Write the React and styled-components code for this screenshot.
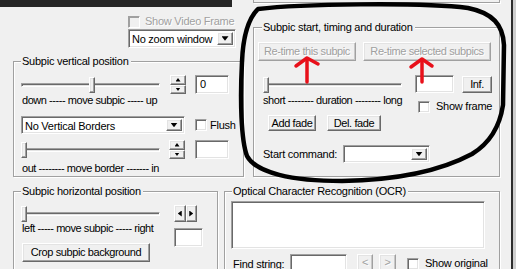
import React from 'react';
import styled, { createGlobalStyle, css } from 'styled-components';

const GlobalStyle = createGlobalStyle`
  html, body {
    margin: 0;
    padding: 0;
    background: #f0f0f0;
  }
  body {
    font-family: 'Liberation Sans', Arial, sans-serif;
  }
`;

const raised = css`
  box-sizing: border-box;
  background: #f0f0f0;
  border: 1px solid;
  border-color: #fff #696969 #696969 #fff;
  box-shadow: inset -1px -1px 0 #a0a0a0, inset 1px 1px 0 #e3e3e3;
`;

const sunken = css`
  box-sizing: border-box;
  background: #fff;
  border: 1px solid;
  border-color: #a0a0a0 #fff #fff #a0a0a0;
  box-shadow: inset 1px 1px 0 #696969, inset -1px -1px 0 #e3e3e3;
`;

const disabledText = css`
  color: #a0a0a0;
  text-shadow: 1px 1px 0 #fff;
`;

const Page = styled.div`
  position: relative;
  width: 516px;
  height: 269px;
  overflow: hidden;
  display: flex;
  background: #f0f0f0;
  font: 11px/13px 'Liberation Sans', Arial, sans-serif;
  letter-spacing: -0.25px;
  color: #000;
`;

const Main = styled.div`
  width: 503px;
  display: flex;
  flex-direction: column;
  flex: none;
`;

const EdgeStrip = styled.div`
  flex: none;
  width: 13px;
  display: flex;
  box-sizing: border-box;
  padding-left: 8px;
  &::before {
    content: '';
    width: 2px;
    background: #2e2e2e;
  }
  &::after {
    content: '';
    width: 3px;
    background: #cfcfcf;
  }
`;

const TopSection = styled.div`
  display: flex;
  height: 177px;
  flex: none;
`;

const BottomSection = styled.div`
  display: flex;
  align-items: flex-start;
`;

const LeftTop = styled.div`
  width: 253px;
  flex: none;
  display: flex;
  flex-direction: column;
`;

const TimingColumn = styled.div`
  width: 247px;
  flex: none;
  display: flex;
  flex-direction: column;
`;

const DarkBar = styled.div`
  width: 232px;
  height: 7px;
  background: #262626;
`;

const PanelStub = styled.div`
  box-sizing: border-box;
  height: 3px;
  border: 1px solid #a0a0a0;
  border-top: none;
  box-shadow: 1px 1px 0 #fff;
`;

const Group = styled.fieldset`
  box-sizing: border-box;
  flex: none;
  min-width: 0;
  margin: ${(p) => p.$margin || '0'};
  width: ${(p) => p.$w}px;
  height: ${(p) => p.$h}px;
  padding: ${(p) => p.$pad};
  border: 1px solid #a0a0a0;
  box-shadow: inset 1px 1px 0 #fff, 1px 1px 0 #fff;
`;

const Legend = styled.legend`
  height: 13px;
  line-height: 13px;
  padding: 0 2px 0 1px;
  margin-left: ${(p) => p.$lx || 0}px;
  background: #f0f0f0;
  white-space: nowrap;
`;

const Row = styled.div`
  display: flex;
  align-items: ${(p) => p.$align || 'center'};
  margin-top: ${(p) => p.$mt || 0}px;
  margin-left: ${(p) => p.$ml || 0}px;
  gap: ${(p) => p.$gap || 0}px;
`;

const Column = styled.div`
  display: flex;
  flex-direction: column;
  align-items: flex-start;
  width: ${(p) => (p.$w ? `${p.$w}px` : 'auto')};
  flex: none;
`;

const Caption = styled.div`
  height: 13px;
  white-space: nowrap;
  flex: none;
  width: ${(p) => (p.$w ? `${p.$w}px` : 'auto')};
  margin-left: ${(p) => p.$ml || 0}px;
  margin-top: ${(p) => p.$mt || 0}px;
  letter-spacing: ${(p) => (p.$tight ? '-0.45px' : 'inherit')};
`;

const Button = styled.button`
  ${raised};
  flex: none;
  width: ${(p) => p.$w}px;
  height: ${(p) => p.$h || 19}px;
  margin: ${(p) => p.$margin || '0'};
  padding: 0;
  font: inherit;
  letter-spacing: -0.4px;
  color: #000;
  white-space: nowrap;
  &:disabled {
    ${disabledText};
    box-shadow: inset -1px -1px 0 #c8c8c8, inset 1px 1px 0 #e3e3e3;
    border-color: #fff #a0a0a0 #a0a0a0 #fff;
  }
`;

const Edit = styled.div`
  ${sunken};
  flex: none;
  width: ${(p) => p.$w}px;
  height: ${(p) => p.$h || 19}px;
  margin: ${(p) => p.$margin || '0'};
  padding: 2px 0 0 4px;
  white-space: nowrap;
`;

const ComboBox = styled.div`
  ${sunken};
  flex: none;
  display: flex;
  align-items: stretch;
  width: ${(p) => p.$w}px;
  height: ${(p) => p.$h || 19}px;
  margin: ${(p) => p.$margin || '0'};
  padding: 2px;
`;

const ComboText = styled.div`
  flex: 1;
  padding-left: 1px;
  line-height: 14px;
  white-space: nowrap;
  overflow: hidden;
`;

const DropButton = styled.div`
  ${raised};
  width: 16px;
  flex: none;
  display: flex;
  align-items: center;
  justify-content: center;
`;

const Arrow = styled.span`
  display: block;
  background: ${(p) => (p.$disabled ? '#a0a0a0' : '#000')};
  width: ${(p) => (p.$dir === 'left' || p.$dir === 'right' ? p.$s / 2 + 1 : p.$s)}px;
  height: ${(p) => (p.$dir === 'left' || p.$dir === 'right' ? p.$s : p.$s / 2 + 1)}px;
  clip-path: ${(p) =>
    ({
      down: 'polygon(0 0, 100% 0, 50% 100%)',
      up: 'polygon(50% 0, 100% 100%, 0 100%)',
      left: 'polygon(0 50%, 100% 0, 100% 100%)',
      right: 'polygon(0 0, 100% 50%, 0 100%)',
    })[p.$dir]};
`;

const CheckLabel = styled.div`
  display: flex;
  align-items: center;
  flex: none;
  gap: ${(p) => p.$gap || 3}px;
  height: 13px;
  white-space: nowrap;
  margin-left: ${(p) => p.$ml || 0}px;
  margin-top: ${(p) => p.$mt || 0}px;
  ${(p) => p.$disabled && disabledText};
`;

const CheckBox = styled.span`
  ${sunken};
  width: 12px;
  height: 12px;
  flex: none;
  background: ${(p) => (p.$disabled ? '#f0f0f0' : '#fff')};
  ${(p) => p.$disabled && 'box-shadow: inset 1px 1px 0 #a0a0a0;'}
`;

const SliderBox = styled.div`
  position: relative;
  flex: none;
  display: flex;
  align-items: center;
  width: ${(p) => p.$w}px;
  height: ${(p) => p.$h || 19}px;
`;

const Channel = styled.div`
  ${sunken};
  width: 100%;
  height: 4px;
  background: #f0f0f0;
`;

const Thumb = styled.div`
  ${raised};
  position: absolute;
  top: 50%;
  width: 6px;
  height: 16px;
  margin-top: -8px;
`;

const SpinBox = styled.div`
  flex: none;
  display: flex;
  flex-direction: ${(p) => (p.$horizontal ? 'row' : 'column')};
  width: ${(p) => p.$w}px;
  height: ${(p) => p.$h}px;
  margin: ${(p) => p.$margin || '0'};
`;

const SpinPart = styled.div`
  ${raised};
  flex: 1;
  display: flex;
  align-items: center;
  justify-content: center;
`;

const TextArea = styled.div`
  ${sunken};
  width: 254px;
  height: 48px;
`;

const Overlay = styled.svg`
  position: absolute;
  left: 0;
  top: 0;
  pointer-events: none;
`;

function Slider({ w, h, value }) {
  const left = Math.round((w - 6) * value);
  return (
    <SliderBox $w={w} $h={h}>
      <Channel />
      <Thumb style={{ left }} />
    </SliderBox>
  );
}

function Combo({ w, h, text, margin }) {
  return (
    <ComboBox $w={w} $h={h} $margin={margin}>
      <ComboText>{text}</ComboText>
      <DropButton>
        <Arrow $dir="down" $s={7} />
      </DropButton>
    </ComboBox>
  );
}

function Spin({ margin }) {
  return (
    <SpinBox $w={16} $h={19} $margin={margin}>
      <SpinPart>
        <Arrow $dir="up" $s={5} />
      </SpinPart>
      <SpinPart>
        <Arrow $dir="down" $s={5} />
      </SpinPart>
    </SpinBox>
  );
}

function HSpin() {
  return (
    <SpinBox $horizontal $w={23} $h={17}>
      <SpinPart>
        <Arrow $dir="left" $s={6} />
      </SpinPart>
      <SpinPart>
        <Arrow $dir="right" $s={6} />
      </SpinPart>
    </SpinBox>
  );
}

function Check({ label, disabled, gap, ml, mt }) {
  return (
    <CheckLabel $disabled={disabled} $gap={gap} $ml={ml} $mt={mt}>
      <CheckBox $disabled={disabled} />
      {label}
    </CheckLabel>
  );
}

export default function App() {
  return (
    <>
      <GlobalStyle />
      <Page>
        <Main>
          <TopSection>
            <LeftTop>
              <DarkBar />
              <Check label="Show Video Frame" disabled gap={5} ml={128} mt={8} />
              <Combo w={108} h={19} text="No zoom window" margin="1px 0 0 128px" />
              <Group $w={231} $h={122} $margin="7px 0 0 13px" $pad="7px 0 0 7px">
                <Legend>Subpic vertical position</Legend>
                <Row>
                  <Slider w={139} value={0.51} />
                  <Spin margin="0 0 0 10px" />
                  <Edit $w={34} $margin="0 0 0 9px">0</Edit>
                </Row>
                <Caption $ml={1} $tight>down ----- move subpic ----- up</Caption>
                <Row $mt={9}>
                  <Combo w={164} h={18} text="No Vertical Borders" />
                  <Check label="Flush" ml={10} />
                </Row>
                <Row $mt={6}>
                  <Slider w={139} value={0} />
                  <Spin margin="0 0 0 9px" />
                  <Edit $w={34} $margin="0 0 0 10px" />
                </Row>
                <Caption $ml={1} $mt={3} $tight>out -------- move border ------- in</Caption>
              </Group>
            </LeftTop>
            <TimingColumn>
              <PanelStub />
              <Group $w={247} $h={156} $margin="18px 0 0 0" $pad="8px 0 0 9px">
                <Legend $lx={-1}>Subpic start, timing and duration</Legend>
                <Row $ml={-5} $gap={7}>
                  <Button $w={98} disabled>Re-time this subpic</Button>
                  <Button $w={128} disabled>Re-time selected subpics</Button>
                </Row>
                <Row $mt={14} $align="flex-start">
                  <Slider w={139} value={0} />
                  <Edit $w={39} $h={18} $margin="0 0 0 13px" />
                  <Button $w={30} $h={17} $margin="1px 0 0 8px">Inf.</Button>
                </Row>
                <Row $align="flex-start">
                  <Caption $w={155} $tight>short -------- duration -------- long</Caption>
                  <Check label="Show frame" gap={6} mt={6} />
                </Row>
                <Row $mt={2} $ml={5} $gap={11}>
                  <Button $w={48} $h={16}>Add fade</Button>
                  <Button $w={54} $h={16}>Del. fade</Button>
                </Row>
                <Row $mt={14}>
                  <Caption $w={80}>Start command:</Caption>
                  <Combo w={87} h={18} text="" />
                </Row>
              </Group>
            </TimingColumn>
          </TopSection>
          <BottomSection>
            <Group $w={205} $h={100} $margin="8px 0 0 13px" $pad="7px 0 0 7px">
              <Legend>Subpic horizontal position</Legend>
              <Row $align="flex-start">
                <Column $w={153}>
                  <Slider w={139} h={17} value={0} />
                  <Caption $ml={1} $tight>left ----- move subpic ----- right</Caption>
                  <Button $w={128} $margin="8px 0 0 1px">Crop subpic background</Button>
                </Column>
                <Column>
                  <HSpin />
                  <Edit $w={29} $margin="6px 0 0 0" />
                </Column>
              </Row>
            </Group>
            <Group $w={276} $h={100} $margin="8px 0 0 6px" $pad="3px 0 0 6px">
              <Legend $lx={1}>Optical Character Recognition (OCR)</Legend>
              <TextArea />
              <Row $mt={5} $align="flex-start">
                <Caption $w={57} $ml={2} $mt={4}>Find string:</Caption>
                <Edit $w={57} />
                <Button $w={16} $h={17} $margin="0 0 0 10px" disabled>&lt;</Button>
                <Button $w={17} $h={17} $margin="0 0 0 6px" disabled>&gt;</Button>
                <Check label="Show original" gap={6} ml={11} mt={3} />
              </Row>
            </Group>
          </BottomSection>
        </Main>
        <EdgeStrip />
        <Overlay width="516" height="269" viewBox="0 0 516 269">
          <path
            d="M258 9 C300 4 420 2 468 8 C493 13 503 25 504 45 L503 105 C500 125 490 143 472 154 C442 170 402 180 342 181 C292 181 256 173 247 156 C241 140 240 100 242 62 C243 36 248 19 258 9 Z"
            fill="none"
            stroke="#000"
            strokeWidth="4.5"
            strokeLinejoin="round"
          />
          <g stroke="#e8101a" strokeWidth="3.5" fill="none" strokeLinecap="round" strokeLinejoin="round">
            <path d="M307 82 L307 59" />
            <path d="M296 66 L307 58 L318 64" />
            <path d="M422 82 L422 60" />
            <path d="M411 67 L422 59 L432 66" />
          </g>
        </Overlay>
      </Page>
    </>
  );
}
